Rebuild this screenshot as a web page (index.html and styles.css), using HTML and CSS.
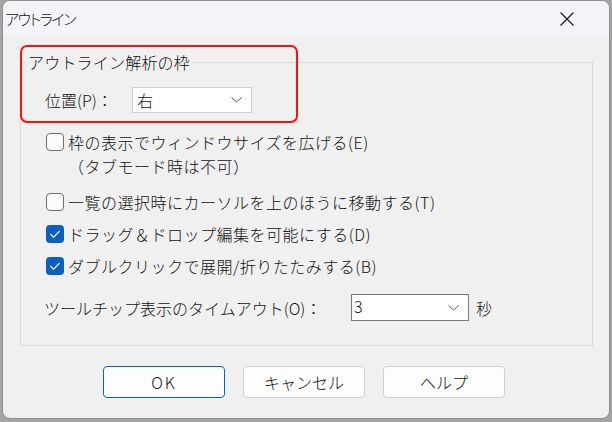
FILE: index.html
```html
<!DOCTYPE html>
<html lang="ja">
<head>
<meta charset="utf-8">
<title>アウトライン</title>
<link rel="stylesheet" href="styles.css">
</head>
<body>
<div class="window">
  <div class="titlebar">
    <span class="title">アウトライン</span>
    <svg class="close" width="16" height="16" viewBox="0 0 16 16"><path d="M1.5 1.5 L14.5 14.5 M14.5 1.5 L1.5 14.5" stroke="#1a1a1a" stroke-width="1.2" fill="none"/></svg>
  </div>
  <div class="content">
    <fieldset class="group">
      <legend>アウトライン解析の枠</legend>
      <div class="inner">
        <div class="row pos-row">
          <span class="label pos-label">位置(P)：</span>
          <div class="select sel-pos"><span class="val">右</span>
            <svg class="chev" width="11" height="6" viewBox="0 0 11 6"><path d="M0.5 0.5 L5.5 5 L10.5 0.5" stroke="#5a5a5a" stroke-width="1" fill="none"/></svg>
          </div>
        </div>
        <div class="check-row r1">
          <span class="cb"></span>
          <span class="cb-text">枠の表示でウィンドウサイズを広げる(E)<br>（タブモード時は不可）</span>
        </div>
        <div class="check-row r2">
          <span class="cb"></span>
          <span class="cb-text">一覧の選択時にカーソルを上のほうに移動する(T)</span>
        </div>
        <div class="check-row r3">
          <span class="cb checked"><svg width="18" height="18" viewBox="0 0 18 18"><path d="M4.5 9.2 L7.6 12.2 L13.6 6.2" stroke="#fff" stroke-width="1.2" fill="none"/></svg></span>
          <span class="cb-text">ドラッグ＆ドロップ編集を可能にする(D)</span>
        </div>
        <div class="check-row r4">
          <span class="cb checked"><svg width="18" height="18" viewBox="0 0 18 18"><path d="M4.5 9.2 L7.6 12.2 L13.6 6.2" stroke="#fff" stroke-width="1.2" fill="none"/></svg></span>
          <span class="cb-text">ダブルクリックで展開/折りたたみする(B)</span>
        </div>
        <div class="row time-row">
          <span class="label time-label">ツールチップ表示のタイムアウト(O)：</span>
          <div class="select sel-time"><span class="val">3</span>
            <svg class="chev" width="11" height="6" viewBox="0 0 11 6"><path d="M0.5 0.5 L5.5 5 L10.5 0.5" stroke="#5a5a5a" stroke-width="1" fill="none"/></svg>
          </div>
          <span class="unit">秒</span>
        </div>
      </div>
    </fieldset>
    <div class="buttons">
      <button class="btn primary">OK</button>
      <button class="btn">キャンセル</button>
      <button class="btn">ヘルプ</button>
    </div>
  </div>
  <div class="highlight"></div>
</div>
</body>
</html>
```
FILE: styles.css
```css
html, body {
  margin: 0;
  padding: 0;
}
body {
  width: 612px;
  height: 422px;
  background: #a4a4a4;
  overflow: hidden;
  font-family: "Noto Sans CJK JP", "Noto Sans", sans-serif;
  font-weight: 300;
  font-size: 16px;
  color: #111;
}
.window {
  position: relative;
  margin: 0 0 0 2px;
  width: 606px;
  height: 417px;
  border: 1px solid #8e8e8e;
  border-radius: 8px;
  background: #f0f0f0;
  overflow: hidden;
}
.titlebar {
  height: 35px;
  background: #f3f3f8;
  display: flex;
  align-items: center;
  justify-content: space-between;
  padding: 0 0 0 2px;
}
.title {
  font-size: 15px;
  line-height: 20px;
  font-feature-settings: "palt";
  letter-spacing: -1.4px;
}
.close {
  margin-right: 34px;
}
.content {
  padding: 16px 0 0 17px;
}
.group {
  margin: 0;
  padding: 0;
  width: 573px;
  height: 294px;
  border: 1px solid #dadada;
  box-sizing: border-box;
  min-width: 0;
}
.group legend {
  margin-left: 5px;
  padding: 0 2px;
  line-height: 20px;
  font-size: 16px;
  letter-spacing: 0.2px;
}
.inner {
  padding-left: 24px;
}
.row {
  display: flex;
  align-items: center;
}
.label {
  line-height: 24px;
}
.pos-row {
  margin-top: 15px;
  height: 26px;
}
.pos-label {
  width: 87px;
}
.select {
  position: relative;
  background: #fff;
  border: 1px solid #cfcfcf;
  box-sizing: border-box;
  display: flex;
  align-items: center;
}
.sel-pos {
  width: 120px;
  height: 26px;
  padding-left: 4px;
}
.chev {
  position: absolute;
  right: 9px;
  top: 50%;
  margin-top: -3px;
}
.val {
  line-height: 22px;
}
.check-row {
  display: flex;
  align-items: flex-start;
  margin-left: 1px;
}
.cb {
  width: 18px;
  height: 18px;
  box-sizing: border-box;
  border: 1px solid #6e6e6e;
  border-radius: 4px;
  background: #fbfbfb;
  margin-top: 3px;
  flex: none;
}
.cb.checked {
  border: none;
  background: #0a5fc0;
}
.cb.checked svg {
  display: block;
}
.cb-text {
  margin-left: 4px;
  line-height: 24px;
  letter-spacing: 0.5px;
}
.r1 { margin-top: 17px; }
.r2 { margin-top: 12px; }
.r3 { margin-top: 8px; }
.r4 { margin-top: 8px; }
.time-row {
  margin-top: 16px;
  height: 27px;
  margin-left: -1px;
}
.time-label {
  width: 307px;
}
.sel-time {
  width: 118px;
  height: 27px;
  border-color: #7a7a7a;
  padding-left: 2px;
}
.sel-time .val {
  margin-top: -3px;
}
.unit {
  margin-left: 7px;
  line-height: 24px;
}
.buttons {
  display: flex;
  gap: 18px;
  margin: 20px 0 0 83px;
}
.btn {
  width: 122px;
  height: 32px;
  box-sizing: border-box;
  background: #fdfdfd;
  border: 1px solid #d0d0d0;
  border-radius: 4px;
  font-family: "Noto Sans CJK JP", "Noto Sans", sans-serif;
  font-weight: 300;
  font-size: 16px;
  color: #111;
  padding: 0;
}
.btn.primary {
  border: 1px solid #0067c0;
  letter-spacing: 2px;
}
.highlight {
  position: absolute;
  left: 17px;
  top: 44px;
  width: 278px;
  height: 78px;
  border: 2px solid #ff1010;
  border-radius: 7px;
  box-sizing: border-box;
}
```
